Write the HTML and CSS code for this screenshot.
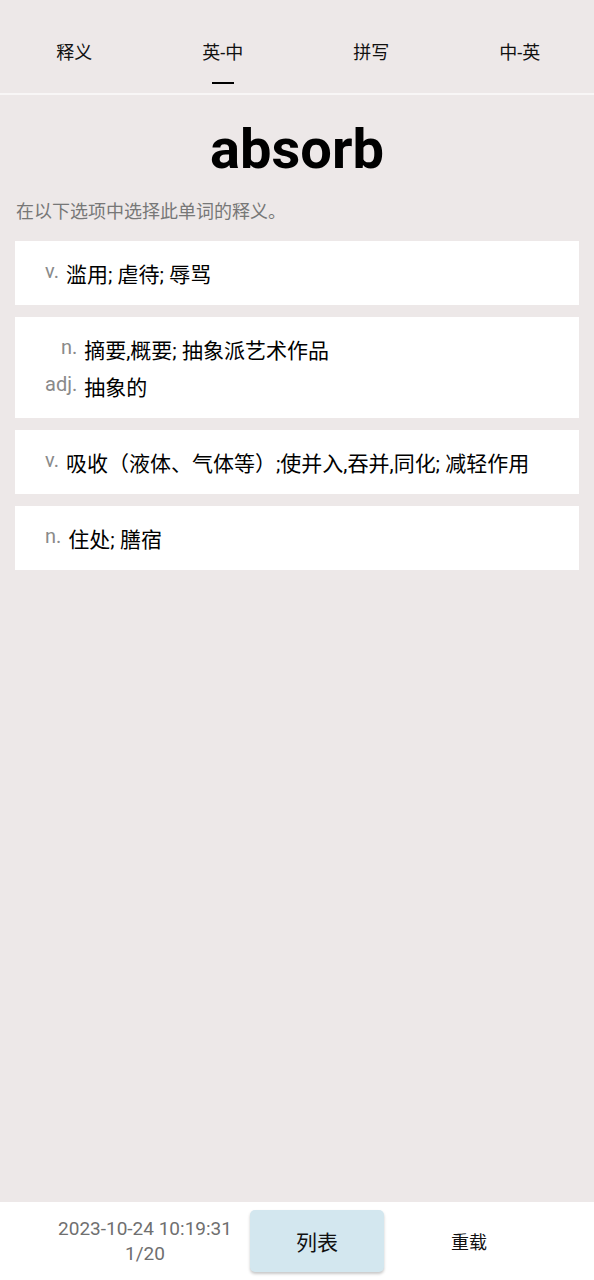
FILE: index.html
```html
<!DOCTYPE html>
<html lang="zh">
<head>
<meta charset="utf-8">
<title>absorb</title>
<link rel="stylesheet" href="styles.css">
</head>
<body>
<div class="app">
  <header class="tabs">
    <div class="tab"><span class="tab-label">释义</span></div>
    <div class="tab active"><span class="tab-label">英-中</span><span class="indicator"></span></div>
    <div class="tab"><span class="tab-label">拼写</span></div>
    <div class="tab"><span class="tab-label">中-英</span></div>
  </header>
  <main class="content">
    <h1 class="word">absorb</h1>
    <p class="hint">在以下选项中选择此单词的释义。</p>
    <div class="options">
      <div class="card">
        <span class="pos">v.</span><span class="def">滥用; 虐待; 辱骂</span>
      </div>
      <div class="card">
        <span class="pos">n.</span><span class="def">摘要,概要; 抽象派艺术作品</span>
        <span class="pos">adj.</span><span class="def">抽象的</span>
      </div>
      <div class="card">
        <span class="pos">v.</span><span class="def">吸收（液体、气体等）;使并入,吞并,同化; 减轻作用</span>
      </div>
      <div class="card">
        <span class="pos">n.</span><span class="def">住处; 膳宿</span>
      </div>
    </div>
  </main>
  <footer class="bottom">
    <div class="status">
      <div>2023-10-24 10:19:31</div>
      <div>1/20</div>
    </div>
    <div class="btn-list">列表</div>
    <div class="reload">重载</div>
  </footer>
</div>
</body>
</html>
```

FILE: styles.css
```css
html, body {
  margin: 0;
  padding: 0;
}
body {
  background: #ede8e8;
  font-family: Roboto, "Noto Sans CJK SC", sans-serif;
  color: #000;
}
.app {
  width: 594px;
  height: 1280px;
  display: flex;
  flex-direction: column;
}
.tabs {
  height: 93px;
  display: grid;
  grid-template-columns: repeat(4, 1fr);
  border-bottom: 2px solid #f8f6f6;
}
.tab {
  display: flex;
  flex-direction: column;
  align-items: center;
  padding-top: 41px;
}
.tab-label {
  font-size: 18px;
  line-height: 24px;
  color: #111;
}
.indicator {
  width: 22px;
  height: 2px;
  background: #000;
  margin-top: 17px;
}
.content {
  flex: 1;
  padding: 0 15px;
  display: flex;
  flex-direction: column;
}
.word {
  margin: 21px 0 0;
  font-size: 56px;
  font-weight: 700;
  line-height: 66px;
  text-align: center;
}
.hint {
  margin: 18px 0 0 1px;
  font-size: 18px;
  line-height: 24px;
  color: #777;
}
.options {
  margin-top: 17px;
  display: flex;
  flex-direction: column;
  gap: 12px;
}
.card {
  background: #fff;
  padding: 16px 20px 11px 30px;
  display: grid;
  grid-template-columns: max-content 1fr;
  column-gap: 7px;
  align-items: start;
}
.pos {
  justify-self: end;
  font-size: 20px;
  line-height: 28px;
  color: #8a8a8a;
}
.def {
  font-size: 21px;
  line-height: 37px;
  color: #000;
}
.bottom {
  height: 78px;
  background: #fff;
  display: grid;
  grid-template-columns: 210px 134px 170px;
  padding-left: 40px;
  align-items: center;
}
.status {
  text-align: center;
  font-size: 19px;
  line-height: 25px;
  color: #6f6f6f;
}
.btn-list {
  height: 62px;
  background: #d3e7ef;
  border-radius: 5px;
  box-shadow: 0 2px 3px rgba(0, 0, 0, 0.22);
  display: flex;
  align-items: center;
  justify-content: center;
  font-size: 21px;
  color: #111;
}
.reload {
  text-align: center;
  font-size: 18px;
  color: #111;
}
```
